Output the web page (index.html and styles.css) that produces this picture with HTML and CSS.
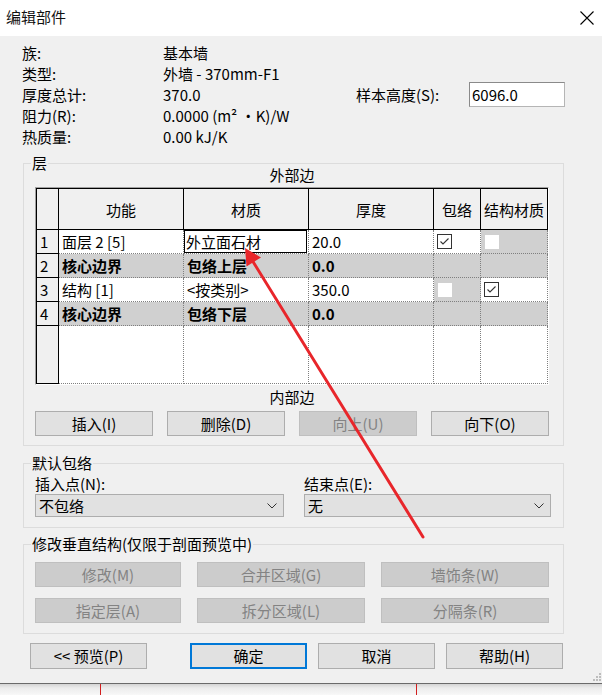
FILE: index.html
```html
<!DOCTYPE html>
<html lang="zh-CN">
<head>
<meta charset="utf-8">
<title>编辑部件</title>
<link rel="stylesheet" href="styles.css">
</head>
<body>
<div class="screen">
  <div class="dialog">
    <div class="titlebar">
      <span class="title">编辑部件</span>
      <svg class="close" width="14" height="14" viewBox="0 0 14 14"><path d="M0.5 0.5 L13.5 13.5 M13.5 0.5 L0.5 13.5" stroke="#000" stroke-width="1.1" fill="none"/></svg>
    </div>
    <div class="content">
      <div class="info">
        <div class="info-row"><span class="k">族:</span><span class="v">基本墙</span></div>
        <div class="info-row"><span class="k">类型:</span><span class="v">外墙 - 370mm-F1</span></div>
        <div class="info-row"><span class="k">厚度总计:</span><span class="v">370.0</span><span class="k2">样本高度(S):</span><div class="field">6096.0</div></div>
        <div class="info-row"><span class="k">阻力(R):</span><span class="v">0.0000 (m² ·K)/W</span></div>
        <div class="info-row"><span class="k">热质量:</span><span class="v">0.00 kJ/K</span></div>
      </div>

      <div class="group g-layers">
        <div class="legend">层</div>
        <div class="gbody layers-body">
          <div class="caption cap-top">外部边</div>
          <div class="tbl">
            <div class="grid">
              <div class="hd"></div>
              <div class="hd">功能</div>
              <div class="hd">材质</div>
              <div class="hd">厚度</div>
              <div class="hd">包络</div>
              <div class="hd">结构材质</div>

              <div class="rh">1</div>
              <div class="c">面层 2 [5]</div>
              <div class="c edit"><div class="editbox">外立面石材</div></div>
              <div class="c">20.0</div>
              <div class="c"><span class="cb"><svg width="13" height="13" viewBox="0 0 13 13"><path d="M2.5 6.5 L5 9 L10.5 3.5" fill="none" stroke="#333" stroke-width="1.1"/></svg></span></div>
              <div class="c g"><span class="cb blank"></span></div>

              <div class="rh">2</div>
              <div class="c g b">核心边界</div>
              <div class="c g b">包络上层</div>
              <div class="c g b">0.0</div>
              <div class="c g"></div>
              <div class="c g"></div>

              <div class="rh">3</div>
              <div class="c">结构 [1]</div>
              <div class="c">&lt;按类别&gt;</div>
              <div class="c">350.0</div>
              <div class="c g"><span class="cb blank"></span></div>
              <div class="c"><span class="cb"><svg width="13" height="13" viewBox="0 0 13 13"><path d="M2.5 6.5 L5 9 L10.5 3.5" fill="none" stroke="#333" stroke-width="1.1"/></svg></span></div>

              <div class="rh">4</div>
              <div class="c g b">核心边界</div>
              <div class="c g b">包络下层</div>
              <div class="c g b">0.0</div>
              <div class="c g"></div>
              <div class="c g"></div>

              <div class="rh"></div>
              <div class="c"></div>
              <div class="c"></div>
              <div class="c"></div>
              <div class="c"></div>
              <div class="c"></div>
            </div>
          </div>
          <div class="caption cap-bottom">内部边</div>
          <div class="btn-row4">
            <div class="btn">插入(I)</div>
            <div class="btn">删除(D)</div>
            <div class="btn disabled">向上(U)</div>
            <div class="btn">向下(O)</div>
          </div>
        </div>
      </div>

      <div class="group g-wrap">
        <div class="legend">默认包络</div>
        <div class="gbody wrap-body">
          <div class="wrap-grid">
            <div class="lbl">插入点(N):</div>
            <div class="lbl">结束点(E):</div>
            <div class="select"><span>不包络</span><svg width="10" height="6" viewBox="0 0 10 6"><path d="M0.5 0.5 L5 5 L9.5 0.5" fill="none" stroke="#333" stroke-width="1"/></svg></div>
            <div class="select"><span>无</span><svg width="10" height="6" viewBox="0 0 10 6"><path d="M0.5 0.5 L5 5 L9.5 0.5" fill="none" stroke="#333" stroke-width="1"/></svg></div>
          </div>
        </div>
      </div>

      <div class="group g-modify">
        <div class="legend">修改垂直结构(仅限于剖面预览中)</div>
        <div class="gbody modify-body">
          <div class="btn-grid3">
            <div class="btn disabled">修改(M)</div>
            <div class="btn disabled">合并区域(G)</div>
            <div class="btn disabled">墙饰条(W)</div>
            <div class="btn disabled">指定层(A)</div>
            <div class="btn disabled">拆分区域(L)</div>
            <div class="btn disabled">分隔条(R)</div>
          </div>
        </div>
      </div>

      <div class="footer">
        <div class="btn fbtn">&lt;&lt; 预览(P)</div>
        <div class="btn fbtn default">确定</div>
        <div class="btn fbtn">取消</div>
        <div class="btn fbtn">帮助(H)</div>
      </div>
    </div>
    <svg class="grip" width="8" height="8" viewBox="0 0 8 8"><rect x="6" y="0" width="2" height="2" fill="#bdbdbd"/><rect x="6" y="3" width="2" height="2" fill="#bdbdbd"/><rect x="3" y="3" width="2" height="2" fill="#bdbdbd"/><rect x="6" y="6" width="2" height="2" fill="#bdbdbd"/><rect x="3" y="6" width="2" height="2" fill="#bdbdbd"/><rect x="0" y="6" width="2" height="2" fill="#bdbdbd"/></svg>
  </div>
  <div class="backdrop"></div>
  <svg class="arrow" width="602" height="695" viewBox="0 0 602 695">
    <line x1="423" y1="537" x2="252" y2="260" stroke="#e8262b" stroke-width="3" stroke-linecap="round"/>
    <polygon points="245,248 261,257.5 246.5,266.5" fill="#e8262b"/>
  </svg>
</div>
</body>
</html>
```

FILE: styles.css
```css
* { box-sizing: border-box; }
html, body { margin: 0; padding: 0; }
body {
  width: 602px;
  height: 695px;
  overflow: hidden;
  font-family: "Noto Sans CJK SC", "Noto Sans CJK JP", sans-serif;
  font-size: 15px;
  color: #000;
  background: #fafafa;
}
.screen { position: relative; width: 602px; height: 695px; }
.dialog { position: relative; width: 602px; border-bottom: 1px solid #6a6a6a; }

.titlebar {
  height: 36px;
  background: #fff;
  display: flex;
  align-items: center;
  justify-content: space-between;
  padding: 0 8px 0 6px;
}
.title { font-size: 15px; line-height: 20px; margin-top: -2px; color: #111; }
.close { display: block; margin-top: -1px; }

.content {
  height: 647px;
  background: #f0f0f0;
}

/* info block */
.info { padding: 6px 0 0 22px; }
.info-row {
  display: flex;
  align-items: center;
  height: 21px;
  line-height: 21px;
  white-space: nowrap;
}
.k { width: 141px; }
.v { width: 193px; }
.k2 { width: 113px; }
.field {
  width: 96px;
  height: 25px;
  margin: -2px 0;
  border: 1px solid #8a8a8a;
  border-right-color: #b5b5b5;
  border-bottom-color: #b5b5b5;
  background: #fff;
  padding-left: 2px;
  line-height: 23px;
}

/* group boxes */
.group {
  margin-left: 23px;
  width: 541px;
  border: 1px solid #dcdcdc;
}
.legend {
  width: fit-content;
  height: 20px;
  line-height: 20px;
  margin: -11px 0 -9px 7px;
  padding: 0 1px;
  background: #f0f0f0;
  white-space: nowrap;
  position: relative;
}
.gbody { padding-left: 11px; }

.g-layers { margin-top: 16px; }
.layers-body { padding-bottom: 9px; }
.caption {
  width: 514px;
  text-align: center;
  white-space: nowrap;
}
.cap-top { height: 23px; line-height: 22px; }
.cap-bottom { height: 26px; line-height: 24px; }

.tbl {
  width: 514px;
  border-top: 1px solid #a0a0a0;
  border-left: 1px solid #a0a0a0;
  border-right: 1px solid #fff;
  border-bottom: 1px solid #fff;
}
.grid {
  display: grid;
  grid-template-columns: 22px 125px 125px 125px 47px 67px;
  grid-template-rows: 41px 24px 24px 24px 24px 58px;
  border-top: 1px solid #000;
  border-left: 1px solid #000;
}
.hd {
  background: #f0f0f0;
  border-right: 1px solid #000;
  border-bottom: 1px solid #000;
  display: flex;
  align-items: center;
  justify-content: center;
  white-space: nowrap;
}
.rh {
  background: #f0f0f0;
  border-right: 1px solid #000;
  border-bottom: 1px solid #000;
  display: flex;
  align-items: center;
  padding-left: 3px;
}
.c {
  background: #fff;
  border-right: 1px dotted #7f7f7f;
  border-bottom: 1px dotted #7f7f7f;
  display: flex;
  align-items: center;
  padding-left: 3px;
  white-space: nowrap;
}
.c.g { background: #d0d0d0; }
.c.b { font-weight: 700; }
.c.edit { padding-left: 0; align-items: flex-start; }
.editbox {
  width: 123px;
  height: 23px;
  border: 1px solid #000;
  background: #fff;
  padding-left: 1px;
  display: flex;
  align-items: center;
}
.cb {
  display: block;
  width: 15px;
  height: 15px;
  border: 1px solid #333;
  background: #fff;
  margin-top: -1px;
}
.cb svg { display: block; }
.cb.blank { width: 14px; height: 14px; border: none; margin-left: 1px; margin-top: 0; }

/* buttons */
.btn {
  height: 25px;
  border: 1px solid #adadad;
  background: #e1e1e1;
  display: flex;
  align-items: center;
  justify-content: center;
  white-space: nowrap;
  line-height: 20px;
}
.btn.disabled {
  background: #cccccc;
  border-color: #bfbfbf;
  color: #838383;
}
.btn-row4 {
  display: grid;
  grid-template-columns: repeat(4, 118px);
  column-gap: 14px;
}

/* default wrap group */
.g-wrap { margin-top: 17px; }
.wrap-body { padding-top: 10px; padding-bottom: 10px; }
.wrap-grid {
  display: grid;
  grid-template-columns: 249px 247px;
  column-gap: 20px;
  grid-template-rows: 20px 23px;
}
.lbl { line-height: 20px; white-space: nowrap; }
.select {
  height: 23px;
  border: 1px solid #adadad;
  background: #e1e1e1;
  display: flex;
  align-items: center;
  justify-content: space-between;
  padding: 0 6px 0 3px;
}
.select svg { display: block; }

/* modify group */
.g-modify { margin-top: 16px; }
.modify-body { padding-top: 17px; padding-bottom: 10px; }
.btn-grid3 {
  display: grid;
  grid-template-columns: 146px 168px 168px;
  grid-template-rows: 25px 25px;
  column-gap: 16px;
  row-gap: 11px;
}

/* footer */
.footer {
  display: flex;
  margin-top: 9px;
  padding-left: 30px;
}
.fbtn { width: 117px; height: 26px; margin-right: 11px; }
.fbtn:first-child { margin-right: 43px; }
.fbtn.default { border: 2px solid #0078d7; }

.grip { position: absolute; right: 1px; bottom: 2px; display: block; }

.backdrop {
  height: 11px;
  background-image:
    linear-gradient(to right, transparent 100px, #d21f1f 100px, #d21f1f 101px, transparent 101px, transparent 416px, #d21f1f 416px, #d21f1f 417px, transparent 417px),
    linear-gradient(#d4d4d4, #ececec 4px, #f8f8f8 11px);
}

.arrow { position: absolute; left: 0; top: 0; pointer-events: none; }
```
